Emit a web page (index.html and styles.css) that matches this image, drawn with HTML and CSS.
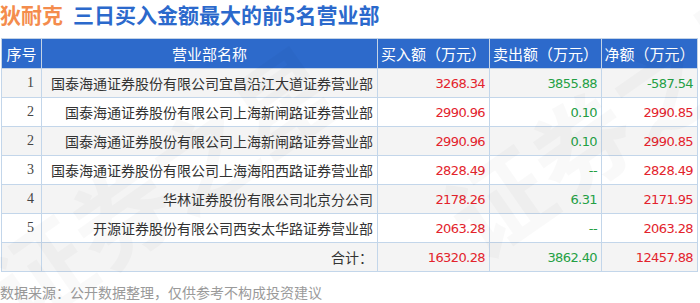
FILE: index.html
```html
<!DOCTYPE html>
<html lang="zh">
<head>
  <meta charset="UTF-8" />
  <title>狄耐克 三日买入金额最大的前5名营业部</title>
  <link rel="stylesheet" href="styles.css">
</head>
<body>
  <div class="page">
    <h1 class="title"><span class="stock">狄耐克</span><span class="desc">三日买入金额最大的前5名营业部</span></h1>

    <table class="rank">
      <colgroup>
        <col class="c-no"><col class="c-name"><col class="c-num"><col class="c-num"><col class="c-net">
      </colgroup>
      <thead>
        <tr>
          <th>序号</th>
          <th>营业部名称</th>
          <th>买入额（万元）</th>
          <th>卖出额（万元）</th>
          <th>净额（万元）</th>
        </tr>
      </thead>
      <tbody>
        <tr>
          <td class="no">1</td>
          <td class="name">国泰海通证券股份有限公司宜昌沿江大道证券营业部</td>
          <td class="up">3268.34</td>
          <td class="down">3855.88</td>
          <td class="down">-587.54</td>
        </tr>
        <tr>
          <td class="no">2</td>
          <td class="name">国泰海通证券股份有限公司上海新闸路证券营业部</td>
          <td class="up">2990.96</td>
          <td class="down">0.10</td>
          <td class="up">2990.85</td>
        </tr>
        <tr>
          <td class="no">2</td>
          <td class="name">国泰海通证券股份有限公司上海新闸路证券营业部</td>
          <td class="up">2990.96</td>
          <td class="down">0.10</td>
          <td class="up">2990.85</td>
        </tr>
        <tr>
          <td class="no">3</td>
          <td class="name">国泰海通证券股份有限公司上海海阳西路证券营业部</td>
          <td class="up">2828.49</td>
          <td class="down">--</td>
          <td class="up">2828.49</td>
        </tr>
        <tr>
          <td class="no">4</td>
          <td class="name">华林证券股份有限公司北京分公司</td>
          <td class="up">2178.26</td>
          <td class="down">6.31</td>
          <td class="up">2171.95</td>
        </tr>
        <tr>
          <td class="no">5</td>
          <td class="name">开源证券股份有限公司西安太华路证券营业部</td>
          <td class="up">2063.28</td>
          <td class="down">--</td>
          <td class="up">2063.28</td>
        </tr>
        <tr class="total">
          <td class="no"></td>
          <td class="name">合计：</td>
          <td class="up">16320.28</td>
          <td class="down">3862.40</td>
          <td class="up">12457.88</td>
        </tr>
      </tbody>
    </table>

    <p class="source">数据来源：公开数据整理，仅供参考不构成投资建议</p>

    <div class="watermark" aria-hidden="true">
      <span class="wm wm-1">证券之星</span>
      <span class="wm wm-2">证券之星</span>
    </div>
  </div>
</body>
</html>
```

FILE: styles.css
```css
body {
  margin: 0;
  background: #fff;
  font-family: "Noto Sans CJK SC", "Noto Sans", sans-serif;
}

.page {
  position: relative;
  width: 700px;
  height: 303px;
  overflow: hidden;
}

.title {
  margin: 0;
  font-size: 21px;
  line-height: 28px;
  font-weight: bold;
  white-space: nowrap;
}

.stock {
  color: #f48c4d;
  margin-right: 10px;
}

.desc {
  color: #2b69cc;
}

.rank {
  margin: 10px 0 0 1px;
  width: 697px;
  border-collapse: collapse;
  table-layout: fixed;
  font-size: 14px;
}

.c-no { width: 40px; }
.c-name { width: 336px; }
.c-num { width: 112px; }
.c-net { width: 96px; }

.rank th {
  height: 29px;
  padding: 0;
  background: #2d6acb;
  color: #fff;
  font-weight: normal;
  font-size: 15px;
  border: 1px solid #c3d3e6;
}

.rank td {
  height: 28px;
  padding: 0 4px 0 0;
  border: 1px solid #c3d6ea;
  text-align: right;
  color: #333;
  white-space: nowrap;
}

.rank tbody tr:nth-child(odd) td {
  background: #f4f4f4;
}

.rank td.no {
  padding-right: 7px;
  font-family: "Liberation Serif", "Noto Serif", serif;
  font-size: 14px;
  color: #444;
}

.rank td.up,
.rank td.down {
  font-family: "DejaVu Sans", sans-serif;
  font-size: 13px;
  letter-spacing: -0.6px;
}

.rank td.up { color: #e3232c; }
.rank td.down { color: #24a044; }

.source {
  margin: 10px 0 0 0;
  font-size: 14px;
  color: #9a9a9a;
  line-height: 20px;
}

.watermark {
  position: absolute;
  inset: 0;
  pointer-events: none;
}

.wm {
  position: absolute;
  font-size: 100px;
  font-weight: bold;
  color: rgba(0, 0, 0, 0.025);
  white-space: nowrap;
  transform: rotate(-35deg);
}

.wm-1 { left: -40px; top: 110px; }
.wm-2 { left: 420px; top: 40px; }
```
